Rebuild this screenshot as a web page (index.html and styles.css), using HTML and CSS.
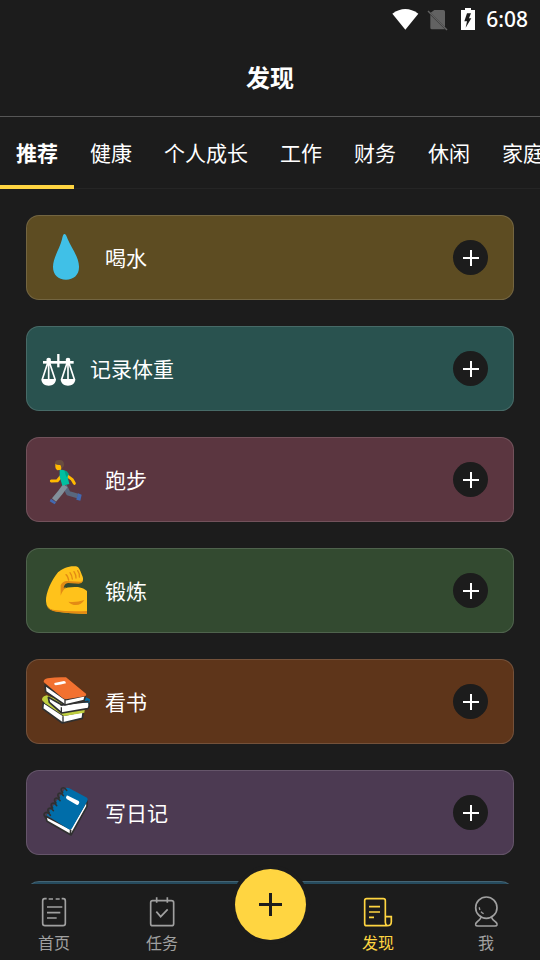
FILE: index.html
```html
<!DOCTYPE html>
<html lang="zh-CN">
<head>
<meta charset="utf-8">
<meta name="viewport" content="width=device-width, initial-scale=1">
<title>发现</title>
<link rel="stylesheet" href="styles.css">
</head>
<body>
<div class="app">
  <div class="status">
    <svg class="status-icons" viewBox="96 15 252 75" aria-hidden="true">
      <path d="M97 35Q136 7 175 35L136 83Z" fill="#fff"/>
      <path d="M223 24H250Q255 24 255 29V75L212 32ZM211 38L255 82H216Q211 82 211 77Z" fill="#626262"/>
      <path d="M204 27L261 84" stroke="#626262" stroke-width="4"/>
      <path d="M315 18H333V24H345V84H303V24H315Z" fill="#fff"/>
      <path d="M321 34H333L327 49H334L317 77L321 58H313Z" fill="#1c1c1c"/>
    </svg>
    <span class="time">6:08</span>
  </div>
  <header class="header"><h1>发现</h1></header>
  <nav class="tabs" aria-label="分类">
    <button class="tab active">推荐</button>
    <button class="tab">健康</button>
    <button class="tab">个人成长</button>
    <button class="tab">工作</button>
    <button class="tab">财务</button>
    <button class="tab">休闲</button>
    <button class="tab">家庭</button>
  </nav>
  <main class="list">
    <article class="card gold">
      <svg class="emoji" viewBox="66 81 144 153" aria-hidden="true">
        <path d="M133 87C138 86 139 93 143 102C153 126 176 155 177 184C178 210 161 224 138 224C115 224 99 210 99 186C99 158 119 132 126 103C128 94 129 88 133 87Z" fill="#40c0e7"/>
      </svg>
      <span class="name">喝水</span>
      <button class="add" aria-label="添加喝水"><svg viewBox="0 0 16 16"><path d="M8 0V16M0 8H16"/></svg></button>
    </article>
    <article class="card teal">
      <svg class="emoji narrow" viewBox="66 69 99 153" aria-hidden="true">
        <g fill="none" stroke="#fff" stroke-width="5">
          <path d="M115 102V142" stroke-width="7"/>
          <path d="M69 127H161" stroke-width="8"/>
          <path d="M86 120L67 178M86 120L105 178M86 120V178M144 120L125 178M144 120L163 178M144 120V178"/>
        </g>
        <g fill="#fff">
          <circle cx="86" cy="120" r="7"/><circle cx="144" cy="120" r="7"/>
          <path d="M64 177H108C108 190 98 197 86 197C74 197 64 190 64 177ZM122 177H166C166 190 156 197 144 197C132 197 122 190 122 177Z"/>
        </g>
      </svg>
      <span class="name">记录体重</span>
      <button class="add" aria-label="添加记录体重"><svg viewBox="0 0 16 16"><path d="M8 0V16M0 8H16"/></svg></button>
    </article>
    <article class="card rose">
      <svg class="emoji" viewBox="66 69 144 153" aria-hidden="true">
        <path d="M134 164L145 187L173 195" fill="none" stroke="#59677e" stroke-width="14" stroke-linejoin="round"/>
        <path d="M174 187L185 191L181 209L169 206Z" fill="#4269b1"/>
        <path d="M136 164L119 187L102 207" fill="none" stroke="#82909b" stroke-width="16" stroke-linejoin="round"/>
        <path d="M93 203L108 214L104 220L89 211Z" fill="#4269b1"/>
        <path d="M122 137L112 149L94 150" fill="none" stroke="#ffb900" stroke-width="9" stroke-linecap="round" stroke-linejoin="round"/>
        <path d="M144 136L156 145L163 157" fill="none" stroke="#ffb900" stroke-width="9" stroke-linecap="round" stroke-linejoin="round"/>
        <path d="M119 117Q134 114 146 129L143 139L148 159L127 164Q123 150 119 137Z" fill="#00bfa0"/>
        <path d="M133 118Q141 120 146 130L139 139Z" fill="#00a184"/>
        <path d="M106 96L126 101L123 116L112 118Q106 114 106 108Z" fill="#ffb900"/>
        <path d="M105 98Q104 88 117 87Q131 86 132 99Q133 108 125 111L121 102Q111 103 105 98Z" fill="#694d40"/>
      </svg>
      <span class="name">跑步</span>
      <button class="add" aria-label="添加跑步"><svg viewBox="0 0 16 16"><path d="M8 0V16M0 8H16"/></svg></button>
    </article>
    <article class="card green">
      <svg class="emoji" viewBox="66 72 144 153" aria-hidden="true">
        <path d="M78 181C77 155 94 119 114 94C126 82 150 73 168 76C180 79 181 92 188 107C192 120 186 127 175 126L141 124Q131 127 125 145Q146 136 174 138Q192 141 201 150V219C160 218 126 216 98 208Q79 203 78 181Z" fill="#ffc21b"/>
        <path d="M81 196Q87 205 103 207Q150 213 201 210V219Q151 218 107 212Q85 208 81 196Z" fill="#e38b14"/>
        <path d="M188 113Q190 122 180 122L139 120Q126 122 122 133V164Q128 147 139 139L131 140Q134 127 144 126L176 128Q190 127 188 113Z" fill="#e38b14"/>
        <path d="M145 182Q169 185 193 177Q184 192 168 192Q154 192 145 182Z" fill="#e38b14"/>
        <path d="M138 101Q143 104 146 117M150 95Q156 103 157 114M162 92Q168 101 168 111M173 89Q180 99 178 108" fill="none" stroke="#e38b14" stroke-width="4" stroke-linecap="round"/>
      </svg>
      <span class="name">锻炼</span>
      <button class="add" aria-label="添加锻炼"><svg viewBox="0 0 16 16"><path d="M8 0V16M0 8H16"/></svg></button>
    </article>
    <article class="card brown">
      <svg class="emoji" viewBox="66 75 144 153" aria-hidden="true">
        <g stroke-linejoin="round">
          <path d="M70 154L68 173L127 216L187 202L190 181L129 193Z" fill="#fff" stroke="#303030" stroke-width="5"/>
          <path d="M66 147Q65 137 80 133L194 177L193 185L132 195L75 157Z" fill="#bfce3e"/>
          <path d="M85 139L88 154L125 186L203 173Q209 169 207 156L197 143L126 162Z" fill="#fff" stroke="#303030" stroke-width="5"/>
          <path d="M181 147L195 137L210 145L208 155L191 155Z" fill="#006da9"/>
          <path d="M121 162L206 151" stroke="#303030" stroke-width="5"/>
          <path d="M75 102L77 122L135 162L192 149L197 133L137 146Z" fill="#fff" stroke="#303030" stroke-width="5"/>
          <path d="M71 93Q71 84 83 82Q113 77 138 79L198 128Q201 133 195 136L138 145Q132 145 125 139Z" fill="#f27130"/>
          <path d="M103 96L132 90Q137 90 138 97Q122 102 107 103Q102 103 103 96Z" fill="#fff"/>
          <path d="M135 147V162M124 169V184M129 196V216" stroke="#303030" stroke-width="4"/>
        </g>
      </svg>
      <span class="name">看书</span>
      <button class="add" aria-label="添加看书"><svg viewBox="0 0 16 16"><path d="M8 0V16M0 8H16"/></svg></button>
    </article>
    <article class="card purple">
      <svg class="emoji" viewBox="66 72 144 153" aria-hidden="true">
        <path d="M77 160L81 175L153 216L201 130V112L151 197Z" fill="#fff" stroke="#303030" stroke-width="5" stroke-linejoin="round"/>
        <path d="M137 75Q142 73 148 76L201 104Q205 108 202 114L156 196Q151 202 145 198L80 157Z" fill="#006da9"/>
        <path d="M152 200L151 215" stroke="#303030" stroke-width="5"/>
        <path d="M140 98Q143 97 147 100L176 114Q180 117 176 123Q173 128 167 124L140 108Q136 104 140 98Z" fill="#fff"/>
        <path d="M140 82C131 68 116 76 128 89M130 98C121 84 106 92 118 105M120 113C111 99 96 107 108 120M110 128C101 114 86 122 98 135M100 143C91 129 76 137 88 150M91 157C80 141 64 151 77 164" fill="none" stroke="#303030" stroke-width="5" stroke-linecap="round"/>
      </svg>
      <span class="name">写日记</span>
      <button class="add" aria-label="添加写日记"><svg viewBox="0 0 16 16"><path d="M8 0V16M0 8H16"/></svg></button>
    </article>
    <article class="card blue"></article>
  </main>
  <nav class="bottom" aria-label="主导航">
    <a class="item" href="#home">
      <svg viewBox="117 111 90 90" aria-hidden="true"><path d="M140 116H134Q128 116 128 123V190Q128 197 135 197H189Q196 197 196 190V123Q196 116 190 116H185M146 117H159M167 117H179M141 141H187M141 158H181M141 174H170"/></svg>
      <span>首页</span>
    </a>
    <a class="item" href="#tasks">
      <svg viewBox="441 111 90 90" aria-hidden="true"><path d="M458 122H514Q521 122 521 128V191Q521 197 514 197H458Q452 197 452 191V128Q452 122 458 122ZM470 112V128M502 112V128M469 155L482 170L503 148"/></svg>
      <span>任务</span>
    </a>
    <button class="fab" aria-label="新建"><svg viewBox="0 0 23 23"><path d="M11.5 0V23M0 11.5H23"/></svg></button>
    <a class="item current" href="#discover">
      <svg viewBox="279 111 90 90" aria-hidden="true"><path d="M346 168V122Q346 116 340 116H290Q284 116 284 122V191Q284 197 290 197H351Q364 197 364 185V170H346V187Q346 194 351 197M297 140H330M297 156H330M297 172H312"/></svg>
      <span>发现</span>
    </a>
    <a class="item" href="#me">
      <svg viewBox="603 111 90 90" aria-hidden="true"><circle cx="649" cy="143" r="32"/><path d="M634 171Q630 180 621 186Q616 190 617 195Q618 198 623 198H675Q680 198 681 195Q682 190 677 186Q667 180 664 171"/><path d="M628 142Q628 147 630 150M633 155Q637 160 641 161" stroke-width="4"/></svg>
      <span>我</span>
    </a>
  </nav>
</div>
</body>
</html>
```
FILE: styles.css
```css
* { box-sizing: border-box; }

body {
  margin: 0;
  background: #1c1c1c;
  color: #fff;
  font-family: Roboto, "Noto Sans CJK SC", sans-serif;
}

button {
  border: 0;
  padding: 0;
  color: inherit;
  font: inherit;
  background: none;
}

.app {
  height: 100vh;
  display: flex;
  flex-direction: column;
  overflow: hidden;
}

.status {
  flex: none;
  height: 38px;
  padding: 0 12px;
  display: flex;
  align-items: center;
  justify-content: flex-end;
  gap: 10px;
}

.status-icons {
  width: 84px;
  height: 25px;
}

.time {
  font-family: "Noto Sans", sans-serif;
  font-size: 21px;
  line-height: 28px;
  font-weight: 500;
}

.header {
  flex: none;
  height: 79px;
  padding-top: 4px;
  display: flex;
  align-items: center;
  justify-content: center;
  border-bottom: 1px solid #565656;
}

.header h1 {
  margin: 0;
  font-size: 24px;
  line-height: 36px;
  font-weight: 700;
}

.tabs {
  flex: none;
  height: 72px;
  display: flex;
  overflow: hidden;
  box-shadow: inset 0 -1px #252525;
}

.tab {
  flex: none;
  height: 72px;
  padding: 6px 16px 0;
  font-size: 21px;
  line-height: 32px;
  border-bottom: 4px solid transparent;
}

.tab.active {
  font-weight: 700;
  border-color: #ffd541;
}

.list {
  flex: 1;
  min-height: 0;
  padding: 26px 26px 0;
  display: flex;
  flex-direction: column;
  gap: 26px;
  overflow: hidden;
}

.card {
  flex: none;
  height: 85px;
  padding: 0 25px 0 15px;
  display: flex;
  align-items: center;
  gap: 15px;
  border: 1px solid rgba(255, 255, 255, 0.14);
  border-radius: 13px;
}

.gold { background: #5d4c22; }
.teal { background: #29524f; }
.rose { background: #5b3640; }
.green { background: #334a30; }
.brown { background: #5e351a; }
.purple { background: #4c3a52; }
.blue { background: #264b5e; }

.emoji {
  flex: none;
  width: 48px;
  height: 51px;
  overflow: visible;
}

.emoji.narrow { width: 33px; }

.name {
  flex: 1;
  padding-top: 3px;
  font-size: 21px;
  line-height: 32px;
}

.add {
  width: 35px;
  height: 35px;
  display: grid;
  place-items: center;
  border-radius: 50%;
  background: #1c1c1c;
}

.add svg {
  width: 16px;
  height: 16px;
  stroke: #fff;
  stroke-width: 2;
}

.bottom {
  flex: none;
  height: 76px;
  display: grid;
  grid-template-columns: repeat(5, 1fr);
  background: #1c1c1c;
}

.item {
  padding-top: 13px;
  display: flex;
  flex-direction: column;
  align-items: center;
  gap: 5px;
  color: #a0a0a0;
  font-size: 16px;
  line-height: 24px;
  text-decoration: none;
}

.item svg {
  width: 30px;
  height: 30px;
  fill: none;
  stroke: currentColor;
  stroke-width: 5;
  overflow: visible;
}

.item.current { color: #ffd541; }

.fab {
  width: 71px;
  height: 71px;
  margin-top: -15px;
  display: grid;
  place-items: center;
  justify-self: center;
  border-radius: 50%;
  color: #1c1c1c;
  background: #ffd541;
  box-shadow: 0 0 0 4px #1c1c1c;
}

.fab svg {
  width: 23px;
  height: 23px;
  stroke: currentColor;
  stroke-width: 3;
}
```
